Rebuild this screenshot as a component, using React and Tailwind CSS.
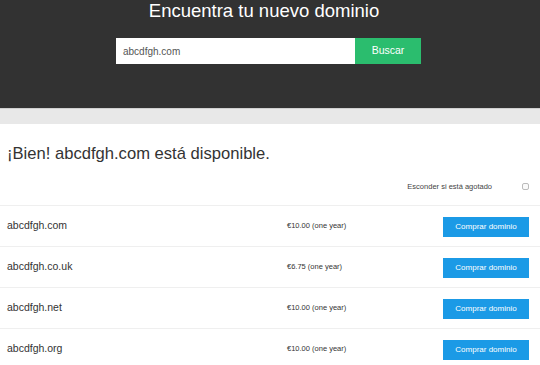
const domains = [
  { name: "abcdfgh.com", price: "€10.00" },
  { name: "abcdfgh.co.uk", price: "€6.75" },
  { name: "abcdfgh.net", price: "€10.00" },
  { name: "abcdfgh.org", price: "€10.00" },
];

function App() {
  return (
    <div className="w-[540px] h-[365px] overflow-hidden bg-white font-['Helvetica_Neue','Liberation_Sans',Arial,sans-serif]">
      <div className="h-[108px] bg-[#323232] flex flex-col items-center">
        <h1 className="pr-[12px] text-[18.5px] leading-[21px] font-light text-white">
          Encuentra tu nuevo dominio
        </h1>
        <div className="mt-[17px] ml-[-3px] flex h-[26px]">
          <div className="w-[239px] bg-white flex items-center pl-[7px] text-[10px] text-[#555]">
            abcdfgh.com
          </div>
          <button className="w-[66px] bg-[#2bbd6e] text-white text-[10.5px]">
            Buscar
          </button>
        </div>
      </div>
      <div className="h-[16px] bg-[#e8e8e8] border-t border-[#cfcfcf]" />

      <div className="pt-[20px]">
        <h2 className="pl-[7px] text-[16.6px] leading-[20px] text-[#333]">
          ¡Bien! abcdfgh.com está disponible.
        </h2>
        <div className="mt-[17px] h-[24px] flex items-start justify-end pr-[11px] gap-[30px]">
          <span className="text-[7.5px] leading-[10px] mt-[1px] text-[#444]">
            Esconder si está agotado
          </span>
          <span className="mt-[2px] w-[7px] h-[7px] rounded-[2px] border border-[#bbb] bg-[#fafafa]" />
        </div>
        {domains.map((d) => (
          <div
            key={d.name}
            className="h-[41px] border-t border-[#efefef] flex items-center"
          >
            <div className="w-[287px] pl-[7px] text-[10.5px] text-[#333]">
              {d.name}
            </div>
            <div className="flex-1 text-[7.5px] text-[#333]">
              {d.price} (one year)
            </div>
            <button className="mr-[11px] mt-[2px] w-[86px] h-[20px] bg-[#1b9ae6] text-white text-[8px]">
              Comprar dominio
            </button>
          </div>
        ))}
      </div>
    </div>
  );
}

export default App;
